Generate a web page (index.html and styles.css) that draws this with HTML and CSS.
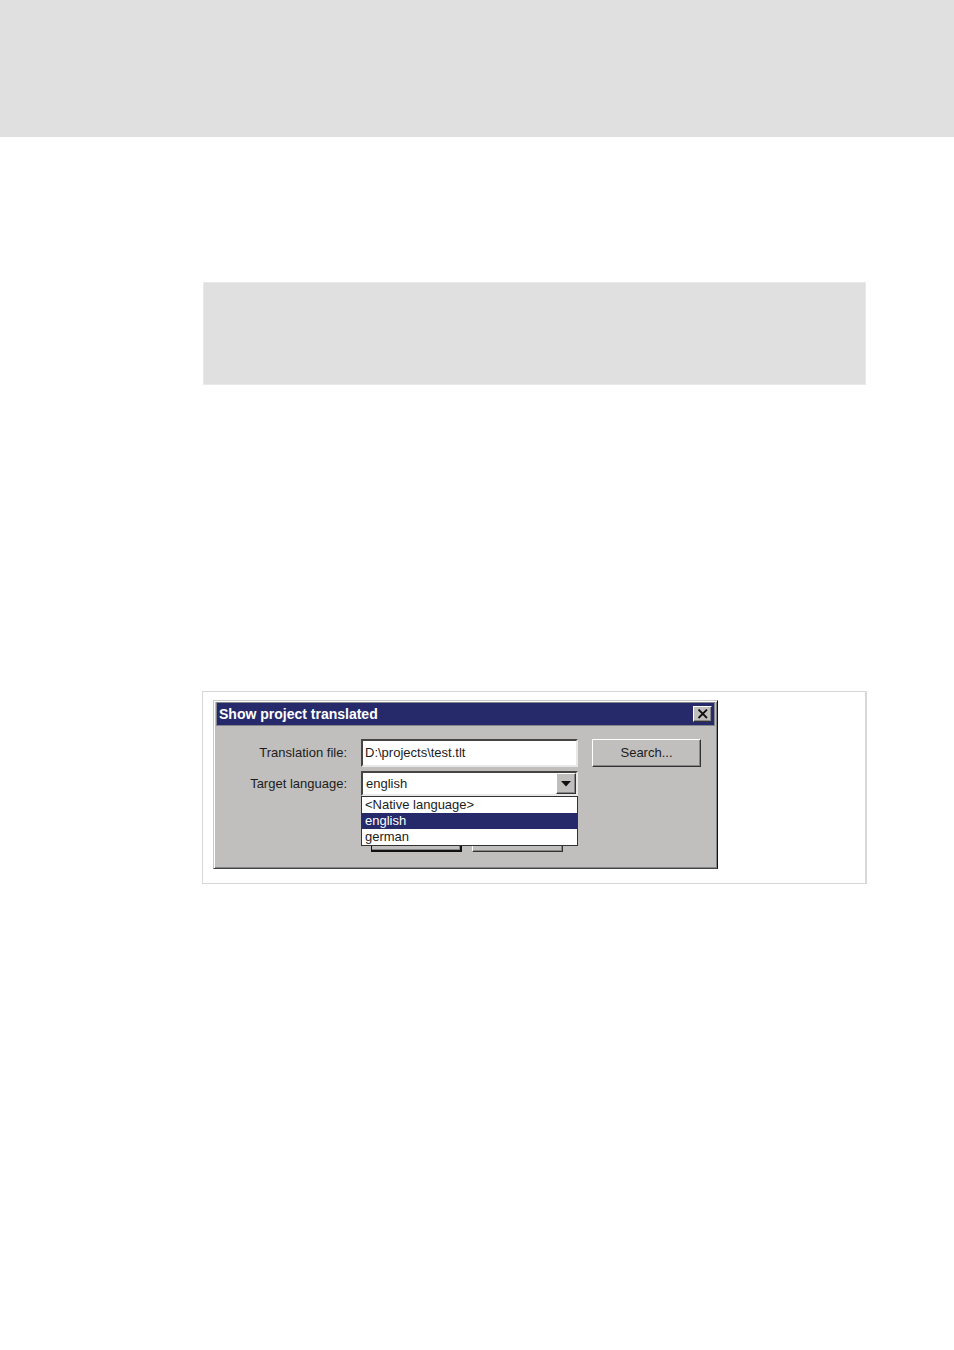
FILE: index.html
```html
<!DOCTYPE html>
<html lang="en">
<head>
  <meta charset="UTF-8">
  <title>Show project translated</title>
  <meta name="viewport" content="width=device-width, initial-scale=1.0">
  <link rel="stylesheet" href="styles.css">
</head>
<body>
  <header class="page-header"></header>

  <main class="content">
    <div class="note"></div>

    <div class="figure">
      <form class="dialog">
        <div class="title-bar">
          <h1>Show project translated</h1>
          <button type="button" class="close" aria-label="Close">
            <svg width="12" height="10" viewBox="0 0 12 10">
              <path d="M1.5 0.5L10 9M10 0.5L1.5 9" fill="none" stroke="#111" stroke-width="1.8"/>
            </svg>
          </button>
        </div>

        <div class="fields">
          <label for="file">Translation file:</label>
          <input type="text" id="file" value="D:\projects\test.tlt">
          <button type="button" class="btn">Search...</button>

          <label for="language">Target language:</label>
          <div class="combo">
            <select id="language">
              <option>&lt;Native language&gt;</option>
              <option selected>english</option>
              <option>german</option>
            </select>
            <span class="arrow">
              <svg width="10" height="6" viewBox="0 0 10 6"><path d="M0 0h10L5 5.5z" fill="#111"/></svg>
            </span>
            <ul class="options" role="listbox" aria-label="Target language">
              <li role="option">&lt;Native language&gt;</li>
              <li role="option" class="selected" aria-selected="true">english</li>
              <li role="option">german</li>
            </ul>
          </div>
        </div>

        <div class="actions">
          <button type="submit" class="btn default" aria-label="OK"></button>
          <button type="button" class="btn" aria-label="Cancel"></button>
        </div>
      </form>
    </div>
  </main>
</body>
</html>
```

FILE: styles.css
```css
* {
  box-sizing: border-box;
}

body {
  margin: 0;
  background: #fff;
  color: #1c1c1c;
  font: 13px/16px 'Liberation Sans', Arial, sans-serif;
}

.page-header {
  height: 137px;
  background: #e0e0e0;
}

.content {
  padding: 145px 87px 0 202px;
}

.note {
  height: 103px;
  margin: 0 1px;
  background: #e0e0e0;
  border: 1px solid #e9e9e9;
}

.figure {
  margin-top: 306px;
  padding: 8px 10px 14px;
  border: 1px solid #d8d8d8;
  border-right-width: 2px;
}

.dialog {
  max-width: 505px;
  padding: 1px 2px 16px 1px;
  background: #c0bfbd;
  border: 1px solid;
  border-color: #c8c8c8 #111 #444 #c8c8c8;
  box-shadow: inset 1px 1px #fff, inset -1px -1px #85868a;
}

.title-bar {
  display: flex;
  align-items: center;
  justify-content: space-between;
  height: 24px;
  margin-left: 1px;
  padding: 0 2px;
  background: #262a6b;
  border: 1px solid #85868a;
}

h1 {
  margin: 0;
  color: #fff;
  font-size: 14px;
  line-height: 20px;
}

button,
input,
select {
  margin: 0;
  font: inherit;
  color: inherit;
  border-radius: 0;
}

.btn,
.close,
.arrow {
  padding: 0;
  background: #c0bfbd;
  border: 1px solid;
  border-color: #fff #333 #333 #fff;
  box-shadow: inset -1px -1px #85868a;
}

.close,
.arrow {
  display: flex;
  align-items: center;
  justify-content: center;
}

.close {
  width: 19px;
  height: 16px;
}

.fields {
  display: grid;
  grid-template-columns: 1fr 217px 109px;
  gap: 4px 14px;
  padding: 13px 14px 0 0;
}

label {
  align-self: center;
  text-align: right;
}

.fields .btn {
  height: 28px;
}

input,
select {
  width: 100%;
  background: #fff;
  border: 2px solid;
  border-color: #444 #e8e8e8 #e8e8e8 #444;
  outline: 0;
}

input {
  height: 28px;
  padding: 0 2px 2px;
}

select {
  display: block;
  height: 25px;
  padding: 0 3px;
  appearance: none;
}

.combo {
  position: relative;
}

.arrow {
  position: absolute;
  top: 2px;
  right: 2px;
  width: 20px;
  height: 21px;
  pointer-events: none;
}

/* open list, drawn over the dialog buttons */
.options {
  position: absolute;
  top: 100%;
  left: 0;
  right: 0;
  z-index: 1;
  margin: 0;
  padding: 0;
  list-style: none;
  background: #fff;
  border: 1px solid #333;
}

.options li {
  padding: 0 3px;
}

.options .selected {
  background: #262a6b;
  color: #fff;
}

.actions {
  display: flex;
  justify-content: center;
  gap: 10px;
  margin-top: 32px;
  padding-left: 4px;
}

.actions .btn {
  width: 91px;
  height: 24px;
}

.actions .default {
  border-color: #111;
  border-width: 1px 2px 2px 1px;
}
```
